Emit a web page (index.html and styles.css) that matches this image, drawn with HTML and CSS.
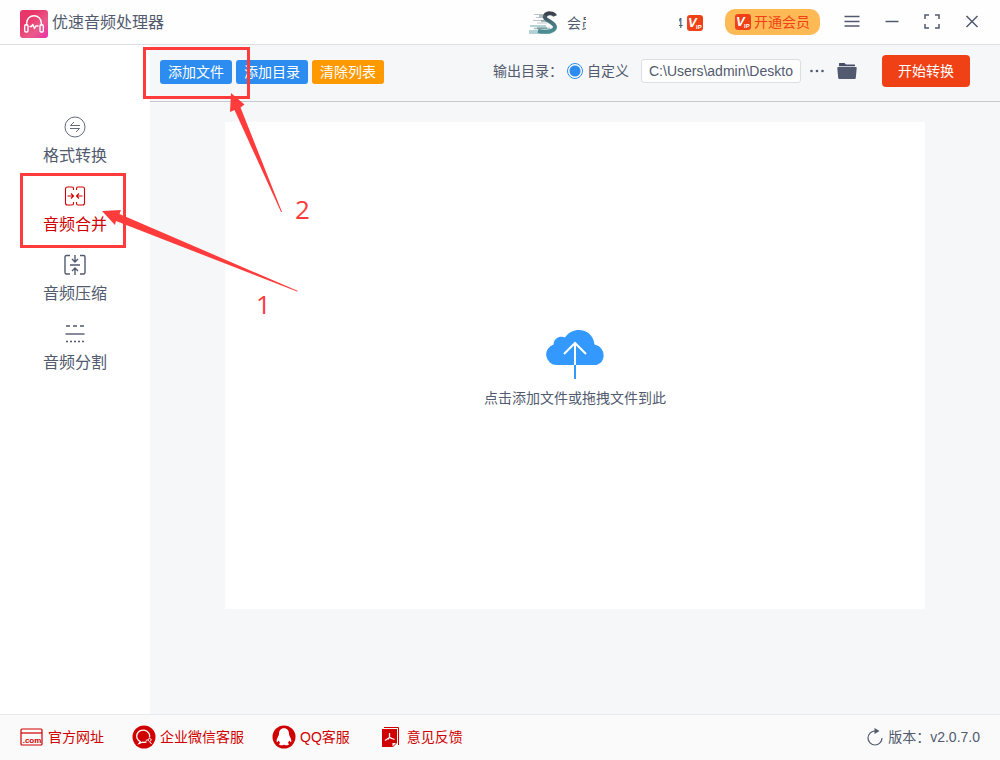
FILE: index.html
```html
<!DOCTYPE html>
<html lang="zh-CN">
<head>
<meta charset="utf-8">
<meta name="viewport" content="width=device-width, initial-scale=1">
<title>优速音频处理器</title>
<link rel="stylesheet" href="styles.css">
</head>
<body>
<svg class="defs" aria-hidden="true">
  <defs>
    <linearGradient id="pink" x1="0" y1="0" x2="1" y2="1">
      <stop offset="0.3" stop-color="#e9366a"/><stop offset="0.65" stop-color="#ea5a88"/><stop offset="1" stop-color="#ea2fae"/>
    </linearGradient>
    <linearGradient id="teal" x1="0" y1="0" x2="0" y2="1">
      <stop offset="0" stop-color="#3c3f4c"/><stop offset="0.5" stop-color="#48747e"/><stop offset="1" stop-color="#4b8f92"/>
    </linearGradient>
    <symbol id="vip" viewBox="0 0 16 16">
      <rect width="16" height="16" rx="3" fill="#f04116"/>
      <text class="vip-v" x="1" y="12">V</text>
      <text class="vip-ip" x="9" y="14">IP</text>
    </symbol>
  </defs>
</svg>

<header class="titlebar">
  <svg class="logo" viewBox="0 0 28 28" width="28" height="28" aria-hidden="true">
    <rect width="28" height="28" rx="3" fill="url(#pink)"/>
    <g fill="none" stroke="#fff" stroke-width="1.4" stroke-linejoin="round" stroke-linecap="round">
      <path d="M6.700 15v-2a7.300 7.300 0 0 1 14.600 0v2"/>
      <rect x="4.700" y="14.700" width="3.300" height="7.300" rx="1.200"/>
      <rect x="20" y="14.700" width="3.300" height="7.300" rx="1.200"/>
      <path d="M10 16.500h1.500l1.300-2 1.700 4 1.300-2.500H18"/>
    </g>
  </svg>
  <h1 class="title">优速音频处理器</h1>
  <div class="account">
    <svg class="avatar" viewBox="0 0 30 24" width="30" height="24" aria-hidden="true">
      <g fill="none">
        <path d="M5 3.500H18M7 6.500H15M4 9.500H15M8 12H18" stroke="#bcc5c9" stroke-width="1"/>
        <path d="M1 15H17M5 17.500H21M0 20H18M0 22H22" stroke="#9cc3c7" stroke-width="1.500"/>
        <path d="M26 5C25 2 18 1 16 5C14 9 26 11 26 16C26 20 19 22 9 20" stroke="url(#teal)" stroke-width="4"/>
        <path d="M10 5H16M12 10H17M8 17H18" stroke="#607d83" stroke-width="1"/>
      </g>
    </svg>
    <span class="member">会员</span>
    <span class="member-end">4</span>
    <svg class="vip" width="16" height="16" aria-hidden="true"><use href="#vip"/></svg>
  </div>
  <button class="upgrade" type="button"><svg width="16" height="16" aria-hidden="true"><use href="#vip"/></svg><span>开通会员</span></button>
  <nav class="window-controls" aria-label="窗口">
    <button class="icon-button" type="button" aria-label="菜单"><svg viewBox="0 0 20 20" width="20" height="20"><path d="M2.500 4.500h15M2.500 9.500h15M2.500 14h15" class="stroke"/></svg></button>
    <button class="icon-button" type="button" aria-label="最小化"><svg viewBox="0 0 20 20" width="20" height="20"><path d="M3.500 9.500h13" class="stroke"/></svg></button>
    <button class="icon-button" type="button" aria-label="最大化"><svg viewBox="0 0 20 20" width="20" height="20"><path d="M3 7V3h4M13 3h4v4M17 12v4h-4M7 16H3v-4" class="stroke"/></svg></button>
    <button class="icon-button" type="button" aria-label="关闭"><svg viewBox="0 0 20 20" width="20" height="20"><path d="M4.500 4l11 11M15.500 4l-11 11" class="stroke"/></svg></button>
  </nav>
</header>

<div class="workspace">
  <nav class="sidebar" aria-label="功能">
    <button class="tool" type="button">
      <svg viewBox="0 0 22 22" width="22" height="22"><g fill="none" stroke="currentColor" stroke-width="0.9"><circle cx="11" cy="11" r="10"/><path d="M16 9.500H6.500L10 6M6 12.500H15.500L12 16"/></g></svg>
      <span>格式转换</span>
    </button>
    <button class="tool active" type="button" aria-current="page">
      <svg viewBox="0 0 22 22" width="22" height="22"><g fill="none" stroke="currentColor" stroke-width="1.100"><path d="M9.500 5V3.500Q9.500 2 8 2H3.500Q1.500 2 1.500 4M1.500 6v10M1.500 18Q1.500 20 3.500 20H8Q9.500 20 9.500 18.500V17M12.500 5V3.500Q12.500 2 14 2H18.500Q20.500 2 20.500 4V18Q20.500 20 18.500 20H14Q12.500 20 12.500 18.500V17M1.500 4V18"/><path d="M3.500 11H9.500M7 8.500l2.500 2.500-2.500 2.500M18.500 11H12.500M15 8.500l-2.500 2.500 2.500 2.500"/></g></svg>
      <span>音频合并</span>
    </button>
    <button class="tool" type="button">
      <svg viewBox="0 0 22 22" width="22" height="22"><g fill="none" stroke="currentColor" stroke-width="1.400"><path d="M6 1.500H2.500Q1 1.500 1 3v15.500Q1 20 2.500 20H6M16 1.500h3.500Q21 1.500 21 3v15.500Q21 20 19.500 20H16M6 11h10M11 1v7M8 5l3 3 3-3M11 21v-7M8 17l3-3 3 3"/></g></svg>
      <span>音频压缩</span>
    </button>
    <button class="tool" type="button">
      <svg viewBox="0 0 22 22" width="22" height="22"><g stroke="currentColor"><path d="M2 3h4M9 3h4M16 3h4" stroke-width="1.500"/><path d="M1.500 11h19" stroke-width="1.400"/><path d="M2 18.500h19" stroke-width="1.400" stroke-dasharray="2 2"/></g></svg>
      <span>音频分割</span>
    </button>
  </nav>

  <main class="content">
    <div class="toolbar">
      <div class="actions">
        <button class="small-button" type="button">添加文件</button>
        <button class="small-button" type="button">添加目录</button>
        <button class="small-button warn" type="button">清除列表</button>
      </div>
      <div class="output">
        <span class="output-label">输出目录：</span>
        <input class="radio" type="radio" name="output" id="custom" checked>
        <label class="radio-label" for="custom">自定义</label>
        <input class="path" type="text" aria-label="输出目录" value="C:\Users\admin\Deskto">
        <button class="more" type="button" aria-label="更多"><svg viewBox="0 0 16 16" width="16" height="16"><g fill="currentColor"><circle cx="2.500" cy="8" r="1.300"/><circle cx="8" cy="8" r="1.300"/><circle cx="13.500" cy="8" r="1.300"/></g></svg></button>
        <button class="folder" type="button" aria-label="打开文件夹"><svg viewBox="0 0 20 18" width="20" height="18"><path d="M2 4.200V1.500Q2 1 2.500 1H7.500L9 2.500H17.500Q18 2.500 18 3V4.200z" fill="#454d66"/><path d="M1 5H19Q19.800 5 19.700 6L18.800 16Q18.700 17 17.700 17H2.300Q1.300 17 1.200 16L.3 6Q.2 5 1 5z" fill="#515a6e"/></svg></button>
      </div>
      <button class="start" type="button">开始转换</button>
    </div>
    <div class="canvas">
      <button class="dropzone" type="button">
        <svg viewBox="0 0 60 52" width="60" height="52" aria-hidden="true">
          <path d="M11.500 37A10.500 10.500 0 0 1 8.500 16.500C9 10 15 7.500 20 9.500C29-3 48 1 49.500 16.500C62 19 61.500 37 49 37z" fill="#3399ff"/>
          <path d="M30 15v22M19 26l11-11 11 11" fill="none" stroke="#fff" stroke-width="2"/>
          <path d="M30 37v14" stroke="#3399ff" stroke-width="2"/>
        </svg>
        <span>点击添加文件或拖拽文件到此</span>
      </button>
    </div>
  </main>
</div>

<footer class="footer">
  <a class="link site" href="#"><svg viewBox="0 0 24 24" width="24" height="24" aria-hidden="true"><rect x="1" y="4" width="21" height="16" rx="1" fill="none" stroke="currentColor" stroke-width="1.200"/><path d="M1 8h21" stroke="currentColor" stroke-width="1.200"/><text class="dotcom" x="12" y="18" text-anchor="middle">.com</text></svg><span>官方网址</span></a>
  <a class="link wechat" href="#"><svg viewBox="0 0 24 24" width="24" height="24" aria-hidden="true"><circle cx="12" cy="12" r="11.500" fill="currentColor"/><g fill="none" stroke="#fff" stroke-width="1.300"><path d="M17.500 12.500A6.500 6 0 1 0 8.300 16.500L7 18.500l3.500-1.300q2 .3 4-.4"/><path d="M17.500 13l-1.700 2 1.700 1.700 2-1.700zM18 17l1.500 2M15.800 15l-2 .3" stroke-width="1"/></g></svg><span>企业微信客服</span></a>
  <a class="link qq" href="#"><svg viewBox="0 0 24 24" width="24" height="24" aria-hidden="true"><circle cx="12" cy="12" r="11.500" fill="currentColor"/><path d="M12 3.300c-3.500 0-5 2.500-5 5.500 0 2.500-2.800 4.700-2.300 8 .3 1 1.300-.3 2-1.200.3 1 .8 1.800 1.500 2.500-1.500.6-1.400 2 0 2.200 1.500.2 3-.1 3.800-.9.800.8 2.300 1.100 3.800.9 1.400-.2 1.500-1.600 0-2.200.7-.7 1.200-1.500 1.500-2.500.7.900 1.700 2.200 2 1.200.5-3.300-2.300-5.500-2.300-8 0-3-1.500-5.500-5-5.500z" fill="#fff"/></svg><span>QQ客服</span></a>
  <a class="link feedback" href="#"><svg viewBox="0 0 18 22" width="18" height="22" aria-hidden="true"><path d="M2 1.500h14.500V19" fill="none" stroke="currentColor"/><path d="M0 3h15v14l-4 4H0z" fill="currentColor"/><path d="M10.500 20.500V17H14z" fill="#fff"/><path d="M7.500 7v4.500L3 14.500M7.500 11.500l5 2M6 13.500L7.500 11l2 1.500" fill="none" stroke="#fff" stroke-width="1.300"/></svg><span>意见反馈</span></a>
  <div class="version"><svg viewBox="0 0 18 20" width="18" height="20" aria-hidden="true"><path d="M9 4A7 7 0 1 0 16 11" fill="none" stroke="currentColor" stroke-width="1.200"/><path d="M8.500 1v6l5-3z" fill="currentColor"/></svg><span>版本：v2.0.7.0</span></div>
</footer>

<svg class="annotations" viewBox="0 0 1000 760" width="1000" height="760" role="img" aria-label="操作步骤">
  <g fill="none" stroke="#ff3b3b" stroke-width="3">
    <rect x="144.500" y="48.500" width="104" height="49"/>
    <rect x="21.500" y="174.500" width="103" height="72"/>
  </g>
  <g fill="#ff3b3b">
    <path d="M231 93L244.500 104.500L240.500 107.500L282 212L281 212L234.500 110L230 112z"/>
    <path d="M102 211L121 210L119.500 214L298 291L297 291.500L116 221L115 225z"/>
    <text class="step" x="295" y="219">2</text>
    <text class="step" x="256" y="314">1</text>
  </g>
</svg>
</body>
</html>
```
FILE: styles.css
```css
* { box-sizing: border-box; }

body {
  margin: 0;
  min-height: 100vh;
  display: flex;
  flex-direction: column;
  position: relative;
  font-family: "Liberation Sans", "Noto Sans CJK SC", sans-serif;
  font-size: 14px;
  line-height: 20px;
  color: #515a6e;
  background: #fff;
}

button, input {
  font: inherit;
  color: inherit;
}

button {
  padding: 0;
  border: 0;
  background: none;
  cursor: pointer;
}

svg { display: block; flex: none; }

.defs { position: absolute; width: 0; height: 0; }

.titlebar {
  display: flex;
  align-items: center;
  height: 45px;
  padding: 0 18px 0 20px;
  border-bottom: 1px solid #dcdee2;
  background: #fefefe;
}

.logo { margin-top: 3px; }

.title {
  margin: 2px auto 0 4px;
  font-size: 16px;
  font-weight: 400;
}

.account { display: flex; align-items: center; padding-top: 2px; }

.member {
  width: 19px;
  margin-left: 8px;
  overflow: hidden;
  white-space: nowrap;
}

.member-end {
  display: flex;
  justify-content: flex-end;
  width: 4px;
  margin: 0 4px 0 93px;
  overflow: hidden;
}

.vip-v {
  font: italic bold 13px "Liberation Sans", sans-serif;
  fill: #fff;
}

.vip-ip {
  font: bold 6px "Liberation Sans", sans-serif;
  fill: #fff;
}

.upgrade {
  display: flex;
  align-items: center;
  gap: 3px;
  height: 26px;
  margin: 0 22px;
  padding: 0 10px;
  border-radius: 10px;
  background: #ffb955;
  color: #f04116;
}

.window-controls { display: flex; gap: 20px; }

.icon-button { width: 20px; height: 20px; }

.stroke { fill: none; stroke: #515a6e; stroke-width: 1.5; }

.workspace { flex: 1; display: flex; }

.sidebar {
  display: flex;
  flex-direction: column;
  flex: none;
  width: 150px;
  padding-top: 71px;
}

.tool {
  display: flex;
  flex-direction: column;
  align-items: center;
  gap: 8px;
  height: 69px;
  font-size: 16px;
}

.active { color: #d00000; }

.content {
  flex: 1;
  display: flex;
  flex-direction: column;
  min-width: 0;
  background: #f5f7f9;
}

.toolbar {
  display: flex;
  align-items: center;
  height: 57px;
  padding: 0 30px 4px 10px;
  border-bottom: 1px solid #c5c8ce;
}

.actions { display: flex; gap: 4px; margin: 2px auto 0 0; }

.small-button {
  height: 24px;
  padding: 0 8px;
  border-radius: 3px;
  background: #2d8cf0;
  color: #fff;
}

.warn { background: #ff9900; }

.output { display: flex; align-items: center; }

.radio {
  appearance: none;
  width: 16px;
  height: 16px;
  margin: 0 4px;
  border: 1px solid #2d8cf0;
  border-radius: 50%;
  background: radial-gradient(circle, #2d8cf0 5px, #fff 6px);
}

.path {
  width: 160px;
  height: 24px;
  margin-left: 12px;
  padding: 0 7px;
  border: 1px solid #dcdee2;
  border-radius: 3px;
  background: #fff;
}

.more { margin-left: 8px; }

.folder { margin-left: 12px; }

.start {
  height: 32px;
  margin-left: 25px;
  padding: 0 16px;
  border-radius: 4px;
  background: #f04116;
  color: #fff;
}

.canvas {
  flex: 1;
  display: flex;
  padding: 20px 75px 105px;
}

.dropzone {
  flex: 1;
  display: flex;
  flex-direction: column;
  align-items: center;
  justify-content: center;
  gap: 8px;
  padding-top: 4px;
  background: #fff;
}

.footer {
  display: flex;
  align-items: center;
  gap: 28px;
  height: 46px;
  padding: 0 20px 2px;
  border-top: 1px solid #e8eaec;
  background: #fafafa;
}

.link {
  display: flex;
  align-items: center;
  gap: 4px;
  color: #d00000;
  text-decoration: none;
}

.feedback { gap: 7px; margin-left: 4px; }

.dotcom {
  font: bold 8px "Liberation Sans", sans-serif;
  fill: #d00000;
}

.version {
  display: flex;
  align-items: center;
  gap: 4px;
  margin-left: auto;
}

.annotations {
  position: absolute;
  top: 0;
  left: 0;
  pointer-events: none;
}

.step { font: 26px "Open Sans", sans-serif; }
```
